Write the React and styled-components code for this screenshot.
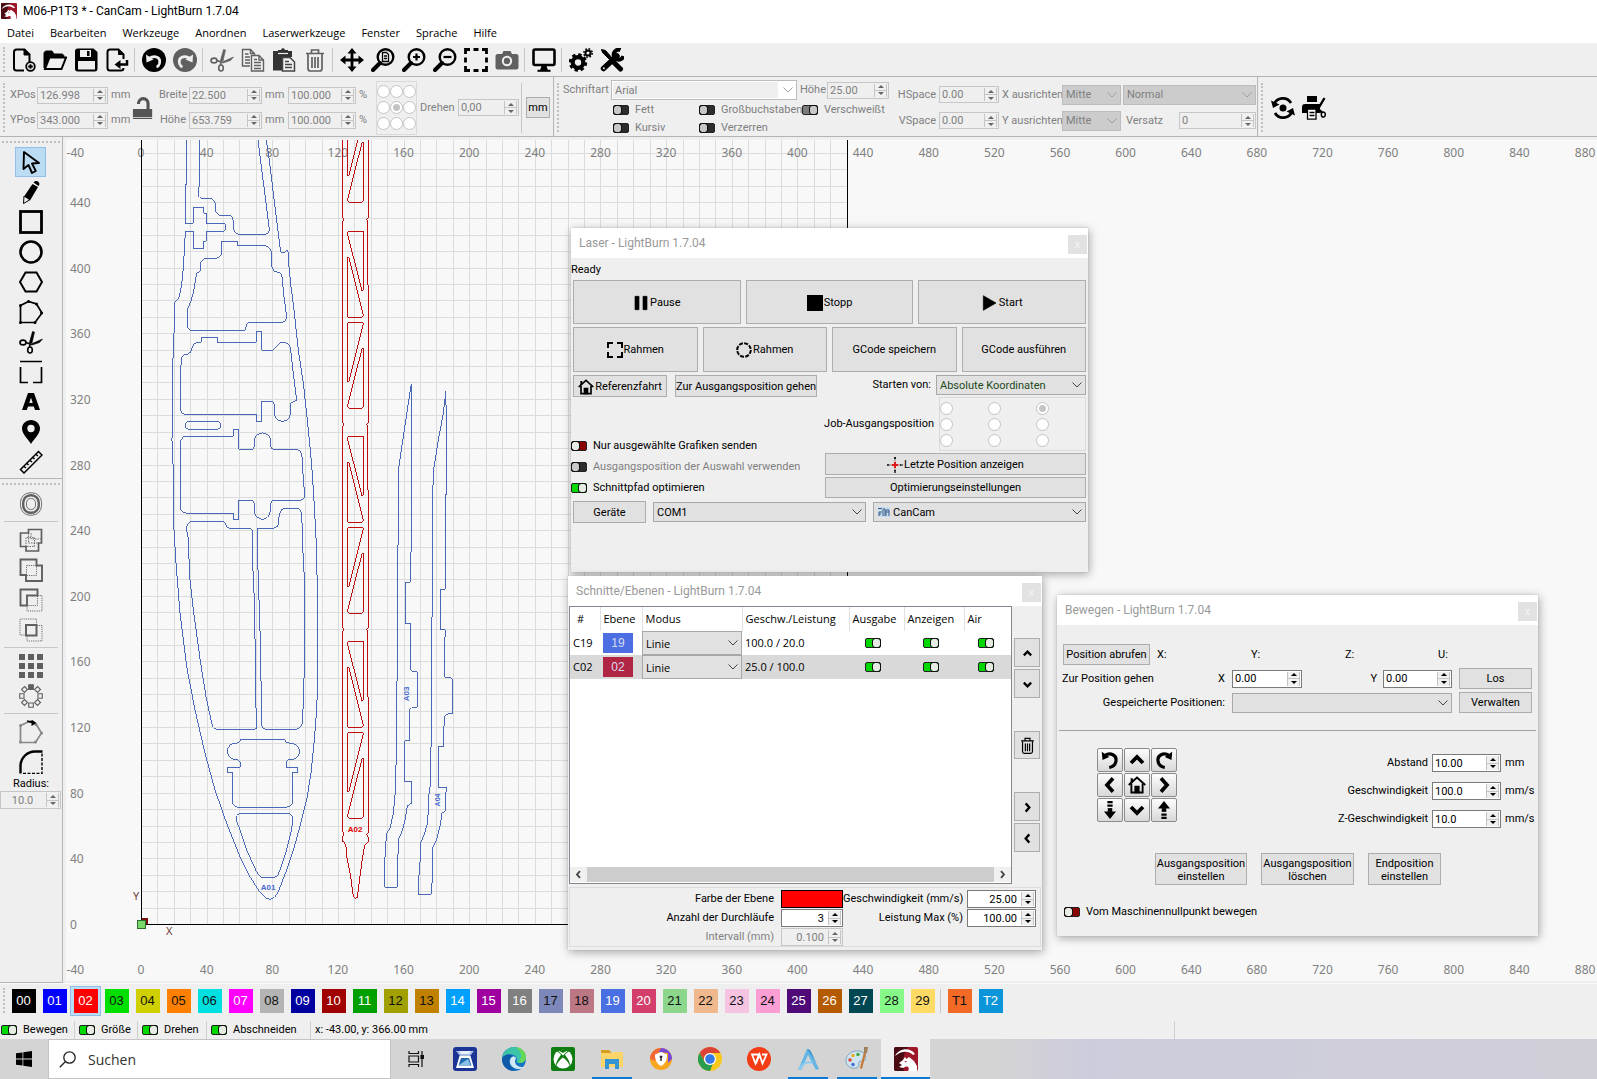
import React from "react";
import styled, { createGlobalStyle, css } from "styled-components";

const GlobalStyle = createGlobalStyle`
  * {
    box-sizing: border-box;
  }

  body {
    margin: 0;
    background: #efefef;
    color: #000;
    font-family: Roboto, "Noto Sans", sans-serif;
    font-size: 11px;
    line-height: 14px;
  }

  button,
  input,
  select {
    margin: 0;
    padding: 0;
    font: inherit;
    color: inherit;
  }
`;

/* ---------- icons ---------- */

const Icon = ({ size = 24, children, ...rest }) => (
  <svg width={size} height={size} viewBox="0 0 24 24" fill="none" stroke="currentColor" strokeWidth="2" aria-hidden="true" {...rest}>
    {children}
  </svg>
);

const scissors = (
  <g strokeWidth="1.6">
    <ellipse cx="4" cy="12.5" rx="3" ry="2.4" />
    <ellipse cx="11" cy="20" rx="2.3" ry="3" />
    <path d="M7 12.5l4 1.5M10.500 17l.5-3" />
    <path d="M10 14L13.500 1.500l2 .5L13 13z" fill="currentColor" strokeWidth="0.6" />
    <path d="M11 14.500L23.500 9l-3 3.500-7.500 2.500z" fill="currentColor" strokeWidth="0.6" />
  </g>
);

const magnifier = (
  <g>
    <circle cx="14.500" cy="9" r="7.800" strokeWidth="2.400" />
    <path d="M9 15L2 22" strokeWidth="4" strokeLinecap="round" />
  </g>
);

const home = (
  <g>
    <path d="M1 12L12 2l11 10" strokeWidth="2.500" />
    <path d="M5 3v6" strokeWidth="3" />
    <path d="M4.500 10v12h15V10" strokeWidth="2.500" />
    <path d="M9.500 22v-8h5v8z" fill="currentColor" />
  </g>
);

const trash = (
  <g strokeWidth="1.700">
    <path d="M3 5.500h18M8.500 5V2h7v3" />
    <path d="M5 6v14.500c0 1.500 1 2.500 2.500 2.500h9c1.500 0 2.500-1 2.500-2.500V6" />
    <path d="M9 9v11M12 9v11M15 9v11" />
  </g>
);

const icons = {
  newFile: (
    <>
      <path d="M12 22.500H4.500c-1.500 0-2.500-1-2.500-2.500V4c0-1.500 1-2.500 2.500-2.500h8l5 5V14" />
      <path d="M12 1.500V7h5.500z" fill="currentColor" strokeWidth="1" />
      <circle cx="18.500" cy="18.500" r="4.300" strokeWidth="1.800" />
      <path d="M18.500 16.200v4.600M16.200 18.500h4.600" strokeWidth="1.800" />
    </>
  ),
  open: (
    <>
      <path d="M1 20V5.500C1 4 2 3 3.500 3H9l2 3h7.500C20 6 21 7 21 8.500H7z" fill="currentColor" strokeWidth="1" />
      <path d="M6.500 9.500h16.500L18.500 21H2z" />
    </>
  ),
  save: (
    <>
      <path d="M1 3c0-1.500 1-2.500 2.500-2.500h16L23.500 4v17c0 1.500-1 2.500-2.500 2.500H3.500c-1.500 0-2.500-1-2.500-2.500z" fill="currentColor" stroke="none" />
      <path d="M6 2h11v7H6zM4 13h17v8.500H4z" fill="#efefef" stroke="none" />
      <path d="M13 3h2.500v5H13z" fill="currentColor" stroke="none" />
    </>
  ),
  exportFile: (
    <>
      <path d="M18.500 11V6.500l-5-5H5C3.500 1.500 2.500 2.500 2.500 4v16c0 1.500 1 2.500 2.500 2.500h11c1.500 0 2.500-1 2.500-2.500" />
      <path d="M13.500 1.500V6.500h5z" fill="currentColor" strokeWidth="1" />
      <path d="M22 12v4.500h-9" strokeWidth="2.500" />
      <path d="M9.500 16.500l6-4.500v9z" fill="currentColor" stroke="none" />
    </>
  ),
  undo: (
    <>
      <circle cx="12" cy="12" r="12" fill="currentColor" stroke="none" />
      <path d="M7 10.500c6-4 12-1 10.500 5-.5 1.800-1.500 3-3 3.500" stroke="#efefef" strokeWidth="2.800" />
      <path d="M4 6.500l.5 8 7-3z" fill="#efefef" stroke="none" />
    </>
  ),
  redo: (
    <>
      <circle cx="12" cy="12" r="12" fill="currentColor" stroke="none" />
      <path d="M17 10.500c-6-4-12-1-10.500 5 .5 1.800 1.500 3 3 3.500" stroke="#efefef" strokeWidth="2.800" />
      <path d="M20 6.500l-.5 8-7-3z" fill="#efefef" stroke="none" />
    </>
  ),
  cut: scissors,
  copy: (
    <g strokeWidth="1.400">
      <path d="M9 18H1.500V1.500h8l4 4V7M9.500 1.500v4h4" />
      <path d="M4 6h3.500M4 9h5M4 12h5M4 15h5" />
      <path d="M10.500 7.500h7.500l4.500 4.500v11h-12zM18 7.500V12h4.500" />
      <path d="M13 11.500h3M13 14.500h7M13 17.500h7M13 20.500h7" />
    </g>
  ),
  paste: (
    <>
      <path d="M1 3h5V2h3c.5-2.500 3.500-2.500 4 0h3v1h4v6h-9v13.500H1z" fill="#333" stroke="none" />
      <path d="M6 5.500h10" stroke="#efefef" strokeWidth="1.200" />
      <path d="M10.500 9.500h7.500l4.500 4.500v9h-12z" fill="#efefef" stroke="#444" strokeWidth="1.500" />
      <path d="M13 13.500h4M13 16.500h7M13 19.500h7" stroke="#444" strokeWidth="1.500" />
    </>
  ),
  trash,
  move: (
    <>
      <path d="M12 3v18M3 12h18" strokeWidth="2.800" />
      <path d="M12 0l4.500 5.500h-9zM12 24l4.500-5.500h-9zM0 12l5.500-4.500v9zM24 12l-5.500-4.500v9z" fill="currentColor" stroke="none" />
    </>
  ),
  zoomPage: (
    <>
      {magnifier}
      <path d="M11.500 4.500h4l2 2v7h-6zM13 8h3M13 10.500h3" strokeWidth="1.300" />
    </>
  ),
  zoomIn: (
    <>
      {magnifier}
      <path d="M14.500 5.500v7M11 9h7" strokeWidth="2.200" />
    </>
  ),
  zoomOut: (
    <>
      {magnifier}
      <path d="M10.500 9h8" strokeWidth="2.200" />
    </>
  ),
  marquee: (
    <path d="M1.500 6V1.500H6M9.500 1.500h5M18 1.500h4.500V6M22.500 9.500v5M22.500 18v4.500H18M14.500 22.500h-5M6 22.500H1.500V18M1.500 14.500v-5" strokeWidth="2.800" />
  ),
  camera: (
    <>
      <path d="M2.500 6H7l1.500-3h7L17 6h4.500c1 0 2 1 2 2v11.500c0 1-1 2-2 2h-19c-1 0-2-1-2-2V8c0-1 1-2 2-2z" fill="currentColor" stroke="none" />
      <circle cx="12" cy="13" r="4.200" stroke="#efefef" />
    </>
  ),
  monitor: (
    <>
      <rect x="1.500" y="1.500" width="21" height="15.500" rx="1.500" strokeWidth="2.600" />
      <path d="M9.500 18h5l1.500 4.500H8z" fill="currentColor" stroke="none" />
      <path d="M5.500 22.800h13" />
    </>
  ),
  gears: (
    <>
      <circle cx="9" cy="14.500" r="5.300" strokeWidth="4.200" />
      <circle cx="9" cy="14.500" r="7.900" strokeWidth="2.600" strokeDasharray="3.400 2.800" />
      <circle cx="19" cy="5" r="2.600" />
      <circle cx="19" cy="5" r="4.200" strokeWidth="1.600" strokeDasharray="1.700 1.600" />
    </>
  ),
  tools: (
    <>
      <path d="M3.500 20.500L17 8" strokeWidth="5.500" strokeLinecap="round" />
      <path d="M20.500 2a5 5 0 1 0 3 6" strokeWidth="4" />
      <path d="M1.500 1.500l4 1L13 11l-2 2-8.500-8.500z" fill="currentColor" strokeWidth="1" />
      <path d="M14.500 15l6 6" strokeWidth="5" strokeLinecap="round" />
      <circle cx="3.800" cy="20.300" r="1" fill="#efefef" stroke="none" />
    </>
  ),
  pointer: <path d="M5 2l-.5 17 5-4 3.500 8 3.800-2-3.800-7.500 7-.5z" strokeWidth="1.900" strokeLinejoin="round" />,
  pencil: (
    <>
      <path d="M13.500 4L19 7 11 20.500l-6-4z" fill="currentColor" stroke="none" />
      <path d="M14.500 2.500c1-1.500 3-2 4.500-1s2 3 .5 4.500z" fill="currentColor" stroke="none" />
      <path d="M5 16l-.5 7.500 6-3.500" strokeWidth="1" />
    </>
  ),
  square: <rect x="1.500" y="1.500" width="21" height="21" strokeWidth="2.800" />,
  circle: <circle cx="12" cy="12" r="10.500" strokeWidth="2.600" />,
  hexagon: <path d="M6.500 2.500h11L23 12l-5.500 9.500h-11L1 12z" />,
  polygon: (
    <>
      <path d="M1.500 5.500L9.500 1.500l8 2.500 5.500 9-7 9.500H1.500z" strokeWidth="1.700" />
      <path d="M1.500 5.500h0M9.500 1.500h0M17.500 4h0M22.500 13h0M16 22.500h0M1.500 22.500h0" strokeWidth="3" strokeLinecap="round" />
    </>
  ),
  tabs: <path d="M1 1.500h22M1.500 7v15.500H9M14 22.500h8.500V7" strokeWidth="1.700" />,
  text: (
    <path d="M9 3h6l6 17h-5l-1.200-3.500H9L7.800 20H3zM12 7.500L10.300 13h3.400z" fill="currentColor" fillRule="evenodd" stroke="none" />
  ),
  pin: <path d="M12 0c5 0 9 4 9 8.500C21 14 15 19 12 24 9 19 3 14 3 8.500 3 4 7 0 12 0zm0 4.800a3.700 3.700 0 1 0 0 7.400 3.700 3.700 0 0 0 0-7.400z" fill="currentColor" fillRule="evenodd" stroke="none" />,
  ruler: (
    <g strokeWidth="1.500">
      <path d="M1.500 19.500L19.500 1.500l3.500 3.500L5 23z" />
      <path d="M5 16.500l2 1.500M8 13.500l1.500 1.500M11 10.500l2 1.500M14 7.500l1.500 1.500M17 4.500l2 1.500" />
    </g>
  ),
  offset: (
    <>
      <rect x="1.500" y=".8" width="21" height="22.400" rx="9.500" strokeWidth=".9" />
      <rect x="4.200" y="3.200" width="15.600" height="17.600" rx="7.500" strokeWidth="2.400" />
      <rect x="7.500" y="6.500" width="9" height="11" rx="4.200" strokeWidth=".9" />
    </>
  ),
  boolUnionAll: (
    <>
      <path d="M1.500 5h8V1.500h13v13.500h-3v8H7v-4.500H1.500z" strokeWidth="1.700" />
      <path d="M9.500 5v10h10M7 18.500V9.500h8.500v9H7M12 5v6h10" strokeWidth=".9" strokeDasharray="1.500 1" />
    </>
  ),
  boolUnion: (
    <>
      <path d="M1.500 1.500h16v6H23V23H7v-6H1.500z" strokeWidth="1.900" />
      <path d="M7.500 7.500h10v10h-10z" strokeWidth=".9" strokeDasharray="1.200 1" />
    </>
  ),
  boolSubtract: (
    <>
      <path d="M1.500 1.500h17v6H8v10H1.500z" strokeWidth="1.900" />
      <path d="M18.500 7.500H23V23H8v-5.500h10.500V7.500" strokeWidth=".9" strokeDasharray="1.200 1" />
    </>
  ),
  boolIntersect: (
    <>
      <path d="M7 7h10.500v10.500H7z" />
      <path d="M17.500 7V1H1v16h6M17.500 7.500H23V23H8v-5.500" strokeWidth=".9" strokeDasharray="1.200 1" />
    </>
  ),
  grid: <path d="M0 0h6v6H0zM9 0h6v6H9zM18 0h6v6h-6zM0 9h6v6H0zM9 9h6v6H9zM18 9h6v6h-6zM0 18h6v6H0zM9 18h6v6H9zM18 18h6v6h-6z" fill="currentColor" stroke="none" />,
  radial: (
    <g strokeWidth="1.100">
      <path d="M9.700.8h4.600v4.600H9.700z" fill="currentColor" />
      <path d="M9.700 19h4.600v4.300H9.700zM.7 9.800H5v4.400H.7zM19 9.800h4.300v4.400H19z" />
      <path d="M5.500 2.500l3 3-3 3-3-3zM18.500 2.500l3 3-3 3-3-3zM5.500 15.500l3 3-3 3-3-3zM18.500 15.500l3 3-3 3-3-3z" />
    </g>
  ),
  startPoint: (
    <>
      <path d="M1.500 5.500L8 2.500M17 4l5.500 9-6 9.500h-15v-17" stroke="#888" strokeWidth="1.700" />
      <path d="M1.500 5.500h0M17 4.500h0M22.500 13h0M16.500 22h0M1.500 22h0" stroke="#888" strokeWidth="3" strokeLinecap="round" />
      <path d="M8 1.500c3-.5 4 .5 6 1" stroke="#000" />
      <path d="M12.500-.5L17.500 3l-5 3z" fill="#000" stroke="none" />
    </>
  ),
  radius: (
    <>
      <path d="M1.500 23.500V16C1.500 8 8 1.500 16 1.500h7.500" strokeWidth="2.400" />
      <path d="M23 3.500v20H3" strokeWidth="1.400" strokeDasharray="3 1.500" />
    </>
  ),
  refresh: (
    <>
      <path d="M3 8.500A9.500 9.500 0 0 1 20 7M21 15.500A9.500 9.500 0 0 1 4 17" strokeWidth="2.800" />
      <path d="M0 4.500l2 7.500 6.500-3.500zM24 19.500L22 12l-6.500 3.500z" fill="currentColor" stroke="none" />
      <circle cx="12" cy="12" r="3.500" fill="currentColor" stroke="none" />
    </>
  ),
  printCut: (
    <>
      <path d="M5 0h10v6H5zM3 8h15v9H0v-6c0-2 1-3 3-3z" fill="currentColor" stroke="none" />
      <path d="M5.500 13h8.500v10.200H5.500z" fill="#fff" strokeWidth="1.300" />
      <path d="M7.500 16.500h5M7.500 19.500h5" strokeWidth="1.300" />
      <path d="M22.500 2L16 13M14 11.500l6 5" strokeWidth="2.400" />
      <ellipse cx="21.300" cy="18.500" rx="2" ry="2.600" strokeWidth="1.500" />
    </>
  ),
  lock: (
    <>
      <path d="M1 13h21v9H1zM1 23h21v1.500H1z" fill="currentColor" stroke="none" />
      <path d="M7 7.500C7 0 17.500 0 17.500 7v7" strokeWidth="3.400" />
    </>
  ),
  pause: <path d="M3 2h6v20H3zM15 2h6v20h-6z" fill="currentColor" stroke="currentColor" strokeWidth="1" />,
  stop: <path d="M0 0h24v24H0z" fill="currentColor" stroke="none" />,
  play: <path d="M2 1l19 11L2 23z" fill="currentColor" stroke="currentColor" strokeWidth="1" />,
  frameSquare: <path d="M1.500 9V1.500H9M15 1.500h7.500V9M22.500 15v7.500H15M9 22.500H1.500V15" strokeWidth="3" />,
  frameCircle: <circle cx="12" cy="12" r="10.200" strokeWidth="3" strokeDasharray="6 2" />,
  home,
  target: (
    <>
      <path d="M12 0v5M12 19v5M0 12h5M19 12h5" strokeWidth="2.600" strokeDasharray="3 1" />
      <path d="M12 7v10M7 12h10" stroke="#e01818" strokeWidth="3" />
    </>
  ),
  up: <path d="M4 16l8-8 8 8" strokeWidth="5" />,
  down: <path d="M4 8l8 8 8-8" strokeWidth="5" />,
  left: <path d="M16 3l-8 9 8 9" strokeWidth="5" />,
  right: <path d="M8 3l8 9-8 9" strokeWidth="5" />,
  turnLeft: (
    <>
      <path d="M5 6c8-5 16 0 15 7-.5 5-4 8-9 9" strokeWidth="4.200" />
      <path d="M1 1l1 11 9-4z" fill="currentColor" stroke="none" />
    </>
  ),
  turnRight: (
    <>
      <path d="M19 6C11 1 3 6 4 13c.5 5 4 8 9 9" strokeWidth="4.200" />
      <path d="M23 1l-1 11-9-4z" fill="currentColor" stroke="none" />
    </>
  ),
  zDown: (
    <>
      <path d="M8.500 1.500h7M8.500 6h7" strokeWidth="3" />
      <path d="M12 9.500v5" strokeWidth="6" />
      <path d="M4 14h16l-8 10z" fill="currentColor" stroke="none" />
    </>
  ),
  zUp: (
    <>
      <path d="M8.500 22.500h7M8.500 18h7" strokeWidth="3" />
      <path d="M12 9.500v5" strokeWidth="6" />
      <path d="M4 10h16L12 0z" fill="currentColor" stroke="none" />
    </>
  ),
};

const DragonLogo = ({ size }) => (
  <Icon size={size} stroke="none">
    <rect width="24" height="24" rx="2" fill="#9c1828" />
    <path d="M2 0h12C9 7 8 15 10 24H2a2 2 0 0 1-2-2V2a2 2 0 0 1 2-2z" fill="#4a0c14" />
    <path d="M1 9C5 1 16 0 21 7l-2 1C14 3 7 4 1 9z" fill="#fff" />
    <path d="M5 16l4-3 2-3 1.500 2L15 10l2 1.500 3 2.500 3 5v5H14c2-3 0-5-2-4.500L9 21l-4-1 3-2z" fill="#fff" />
    <path d="M10 14.500l3-.5-1 1.500z" fill="#9c1828" />
  </Icon>
);

/* ---------- shared controls ---------- */

const ToggleLabel = styled.label`
  display: inline-flex;
  align-items: center;
  gap: 6px;
  white-space: nowrap;
  color: ${(p) => (p.$muted ? "#808080" : "inherit")};
`;

const toggleColors = { on: "#00d800", off: "#8b0000", idle: "#2c2c2c", idleOn: "#7c7c7c" };

const ToggleInput = styled.input`
  appearance: none;
  display: flex;
  flex: none;
  justify-content: ${(p) => (p.defaultChecked ? "flex-end" : "flex-start")};
  width: 16px;
  height: 10px;
  border: 1px solid #222;
  border-radius: 2px;
  background: ${(p) => toggleColors[p.$tone]};

  &::after {
    content: "";
    width: 7px;
    height: 8px;
    border-radius: 2px;
    background: ${(p) => (p.$tone.startsWith("idle") ? "#c8c8c8" : "#e6ebe4")};
    outline: 1px solid #111;
  }
`;

const Toggle = ({ tone = "on", muted, children, ...rest }) => (
  <ToggleLabel $muted={muted}>
    <ToggleInput type="checkbox" $tone={tone} defaultChecked={tone === "on" || tone === "idleOn"} disabled={muted} {...rest} />
    {children}
  </ToggleLabel>
);

const SpinFrame = styled.span`
  display: flex;
  flex: none;
  width: ${(p) => p.$width}px;
  height: ${(p) => p.$height || 18}px;
  border: 1px solid ${(p) => (p.$muted ? "#c6c6c6" : "#7a7a7a")};
  background: ${(p) => (p.$muted ? "#efefef" : "#fff")};
  color: ${(p) => (p.$muted ? "#808080" : "#000")};

  input {
    flex: 1;
    min-width: 0;
    border: 0;
    padding: 1px 3px 0 2px;
    background: transparent;
    text-align: ${(p) => p.$align || "left"};
    outline: none;
  }
`;

const Stepper = styled.span`
  display: flex;
  flex-direction: column;
  width: 13px;
  margin: 1px;
  border: 1px solid #c4c4c4;
  border-width: 0 1px;
  background: #f0f0f0;

  button {
    display: flex;
    flex: 1;
    align-items: center;
    justify-content: center;
    border: 0;
    background: none;
    color: ${(p) => (p.$muted ? "#666" : "#000")};

    &:first-child {
      border-bottom: 1px solid #c4c4c4;
    }
  }
`;

const Spin = ({ label, value, width, height, muted, align }) => (
  <SpinFrame $width={width} $height={height} $muted={muted} $align={align}>
    <input aria-label={label} defaultValue={value} disabled={muted} />
    <Stepper $muted={muted}>
      <button type="button" aria-label={`${label} +`}>
        <svg width="6" height="3" viewBox="0 0 6 3"><path d="M3 0l3 3H0z" fill="currentColor" /></svg>
      </button>
      <button type="button" aria-label={`${label} -`}>
        <svg width="6" height="3" viewBox="0 0 6 3"><path d="M0 0h6L3 3z" fill="currentColor" /></svg>
      </button>
    </Stepper>
  </SpinFrame>
);

const SelectFrame = styled.span`
  display: grid;
  flex: ${(p) => (p.$width ? "none" : 1)};
  align-items: center;
  width: ${(p) => (p.$width ? `${p.$width}px` : "auto")};
  height: ${(p) => p.$height || 20}px;
  border: 1px solid ${(p) => (p.$muted ? "#bcbcbc" : "#a8a8a8")};
  background: ${(p) => (p.$light ? "#fff" : p.$muted ? "#cccccc" : "#e1e1e1")};
  color: ${(p) => p.$color || (p.$muted ? "#808080" : "#000")};

  select,
  svg {
    grid-area: 1 / 1;
  }

  select {
    appearance: none;
    width: 100%;
    height: 100%;
    border: 0;
    padding-top: 1px;
    padding-left: ${(p) => p.$indent || 3}px;
    background: ${(p) => (p.$light ? "linear-gradient(#efefef, #efefef) 1px 1px / calc(100% - 19px) calc(100% - 2px) no-repeat" : "transparent")};
    opacity: 1;
  }

  .chevron {
    justify-self: end;
    margin-right: 3px;
    pointer-events: none;
    color: ${(p) => (p.$muted ? "#a0a0a0" : "#444")};
  }

  .badge {
    margin-left: 4px;
    pointer-events: none;
  }
`;

const Select = ({ label, value, muted, badge, ...rest }) => (
  <SelectFrame $muted={muted} {...rest}>
    <select aria-label={label} defaultValue={value} disabled={muted}>
      <option>{value}</option>
    </select>
    {badge}
    <svg className="chevron" width="10" height="6" viewBox="0 0 10 6" fill="none" stroke="currentColor">
      <path d="M.5.5L5 5 9.500.5" />
    </svg>
  </SelectFrame>
);

const Button = styled.button`
  display: flex;
  flex: ${(p) => (p.$width ? "none" : 1)};
  align-items: center;
  justify-content: center;
  gap: 1px;
  width: ${(p) => (p.$width ? `${p.$width}px` : "auto")};
  height: ${(p) => p.$height || 22}px;
  border: 1px solid #adadad;
  padding-top: 1px;
  background: #e1e1e1;
  color: #000;
  white-space: nowrap;
`;

const RadioGrid = styled.div`
  display: grid;
  flex: none;
  grid-template-columns: repeat(3, ${(p) => p.$col}px);
  grid-auto-rows: ${(p) => p.$row}px;
  align-content: center;
  align-items: center;
  width: ${(p) => p.$width}px;
  height: 54px;
  border: 1px solid #dadada;

  input {
    appearance: none;
    width: 13px;
    height: 13px;
    border: 1px solid #c4c4c4;
    border-radius: 50%;
    background: #fff;

    &:checked {
      background: radial-gradient(circle, #c4c4c4 3px, #fff 4px);
    }
  }
`;

const Anchors = ({ name, checked, ...rest }) => (
  <RadioGrid role="radiogroup" aria-label={name} {...rest}>
    {Array.from({ length: 9 }, (_, i) => (
      <input key={i} type="radio" name={name} aria-label={`${name} ${i + 1}`} defaultChecked={i === checked} disabled />
    ))}
  </RadioGrid>
);

/* ---------- header ---------- */

const Page = styled.div`
  display: flex;
  flex-direction: column;
  min-height: 100vh;
`;

const TitleBar = styled.header`
  display: flex;
  align-items: center;
  gap: 6px;
  height: 22px;
  padding-left: 1px;
  background: #fff;
  font-size: 12px;
`;

const MenuBar = styled.nav`
  display: flex;
  align-items: center;
  gap: 16px;
  height: 21px;
  padding-left: 7px;
  background: #fff;
  font-family: "Open Sans", sans-serif;
  font-size: 11px;

  a {
    color: #000;
    text-decoration: none;
  }
`;

const Toolbar = styled.div`
  display: flex;
  align-items: center;
  height: 34px;
  border-bottom: 1px solid #b4b4b4;
`;

const Grip = styled.span`
  flex: none;
  ${(p) =>
    p.$horizontal
      ? css`
          height: 2px;
          margin: 4px 2px;
          border-top: 2px dotted #c0c0c0;
        `
      : css`
          align-self: stretch;
          width: 2px;
          margin: 4px ${p.$after || 3}px 4px 3px;
          border-left: 2px dotted #c0c0c0;
        `}
`;

const ToolButton = styled.button`
  display: flex;
  align-items: center;
  justify-content: center;
  width: 31px;
  height: 30px;
  border: 1px solid ${(p) => (p.$active ? "#90c0e8" : "transparent")};
  background: ${(p) => (p.$active ? "#bcdcf4" : "none")};
  color: ${(p) => (p.$dim ? "#606060" : "#000")};
`;

const Divider = styled.span`
  flex: none;
  width: 1px;
  height: ${(p) => p.$height || 24}px;
  margin: 0 ${(p) => (p.$wide ? 4 : 3)}px 0 2px;
  background: #c8c8c8;
`;

const Section = styled.section`
  display: flex;
  align-items: center;
  height: 60px;
  padding-top: 2px;
  padding-right: ${(p) => p.$end || 0}px;
  border-right: 1px solid #b4b4b4;
  border-bottom: 1px solid #b4b4b4;
  color: #808080;

  &:last-child {
    flex: 1;
    border-right: 0;
  }
`;

const FieldGrid = styled.div`
  display: grid;
  grid-template-columns: ${(p) => p.$columns};
  align-items: center;
  row-gap: ${(p) => p.$gap}px;
`;

const Caption = styled.span`
  width: ${(p) => (p.$width ? `${p.$width}px` : "auto")};
  padding: 0 3px;
  text-align: ${(p) => (p.$right ? "right" : "left")};
  white-space: nowrap;
`;

const SectionRow = styled.div`
  display: flex;
  align-items: center;
  gap: ${(p) => p.$gap || 0}px;
`;

const LockIcon = styled.span`
  display: flex;
  margin: 0 2px;
  color: #555;
`;

const FontBlock = styled.div`
  display: flex;
  flex-direction: column;
  gap: 3px;
`;

const FontToggles = styled.div`
  display: grid;
  grid-template-columns: 86px 103px auto;
  row-gap: 4px;
  padding-left: 53px;
`;

const topTools = [
  ["Neu", "newFile"],
  ["Öffnen", "open"],
  ["Speichern", "save"],
  ["Exportieren", "exportFile"],
  null,
  ["Rückgängig", "undo"],
  ["Wiederholen", "redo", true],
  null,
  ["Ausschneiden", "cut", true],
  ["Kopieren", "copy", true],
  ["Einfügen", "paste"],
  ["Löschen", "trash", true],
  null,
  ["Verschieben", "move"],
  ["Seite einpassen", "zoomPage"],
  ["Vergrößern", "zoomIn"],
  ["Verkleinern", "zoomOut"],
  ["Auswahl einpassen", "marquee"],
  ["Kamera", "camera", true],
  null,
  ["Vorschau", "monitor"],
  null,
  ["Einstellungen", "gears"],
  ["Geräteeinstellungen", "tools"],
];

const Tools = ({ items, active }) =>
  items.map((item, i) =>
    item ? (
      <ToolButton key={item[1]} type="button" title={item[0]} $dim={item[2]} $active={active === item[1]}>
        <Icon>{icons[item[1]]}</Icon>
      </ToolButton>
    ) : (
      <Divider key={i} />
    )
  );

const PropertyBar = () => (
  <SectionRow>
    <Section $end={3}>
      <Grip $after={2} />
      <FieldGrid $columns="30px 71px 22px" $gap={8}>
        <Caption>XPos</Caption>
        <Spin label="XPos" value="126.998" width={71} height={17} muted />
        <Caption>mm</Caption>
        <Caption>YPos</Caption>
        <Spin label="YPos" value="343.000" width={71} height={17} muted />
        <Caption>mm</Caption>
      </FieldGrid>
      <LockIcon><Icon size={22}>{icons.lock}</Icon></LockIcon>
      <FieldGrid $columns="33px 73px 26px 68px 20px" $gap={8}>
        <Caption $right>Breite</Caption>
        <Spin label="Breite" value="22.500" width={73} height={17} muted />
        <Caption>mm</Caption>
        <Spin label="Breite %" value="100.000" width={68} height={17} muted />
        <Caption>%</Caption>
        <Caption $right>Höhe</Caption>
        <Spin label="Höhe" value="653.759" width={73} height={17} muted />
        <Caption>mm</Caption>
        <Spin label="Höhe %" value="100.000" width={68} height={17} muted />
        <Caption>%</Caption>
      </FieldGrid>
      <Anchors name="Ankerpunkt" checked={4} $width={41} $col={13} $row={16} />
      <Caption $width={41}>Drehen</Caption>
      <Spin label="Drehen" value="0,00" width={61} height={17} muted />
      <Divider $height={50} $wide />
      <Button type="button" $width={24} $height={21}>mm</Button>
    </Section>
    <Section $end={1}>
      <Grip $after={1} />
      <FontBlock>
        <SectionRow>
          <Caption $width={51}>Schriftart</Caption>
          <Select label="Schriftart" value="Arial" muted $light $width={186} />
          <Caption $width={30}>Höhe</Caption>
          <Spin label="Schrifthöhe" value="25.00" width={62} height={17} muted />
        </SectionRow>
        <FontToggles>
          <Toggle tone="idle" muted>Fett</Toggle>
          <Toggle tone="idle" muted>Großbuchstaben</Toggle>
          <Toggle tone="idleOn" muted>Verschweißt</Toggle>
          <Toggle tone="idle" muted>Kursiv</Toggle>
          <Toggle tone="idle" muted>Verzerren</Toggle>
        </FontToggles>
      </FontBlock>
      <FieldGrid $columns="50px 60px 63px 61px 133px" $gap={6}>
        <Caption $right>HSpace</Caption>
        <Spin label="HSpace" value="0.00" width={60} height={17} muted />
        <Caption>X ausrichten</Caption>
        <Select label="X ausrichten" value="Mitte" muted $width={59} />
        <Select label="Textmodus" value="Normal" muted $width={133} />
        <Caption $right>VSpace</Caption>
        <Spin label="VSpace" value="0.00" width={60} height={17} muted />
        <Caption>Y ausrichten</Caption>
        <Select label="Y ausrichten" value="Mitte" muted $width={59} />
        <SectionRow>
          <Caption $width={56}>Versatz</Caption>
          <Spin label="Versatz" value="0" width={77} height={17} muted />
        </SectionRow>
      </FieldGrid>
    </Section>
    <Section>
      <Grip $after={4} />
      <Tools items={[["Ansicht aktualisieren", "refresh"], ["Drucken und Schneiden", "printCut"]]} />
    </Section>
  </SectionRow>
);

/* ---------- left tools ---------- */

const SideBar = styled.aside`
  display: flex;
  flex: none;
  flex-direction: column;
  width: 63px;
  border-right: 1px solid #b4b4b4;
  border-bottom: 1px solid #b4b4b4;
`;

const SideGroup = styled.div`
  display: flex;
  flex-direction: column;

  & + & {
    border-top: 1px solid #b4b4b4;
    margin-top: 1px;
  }

  ${ToolButton} {
    margin-left: 15px;
  }

  ${Divider} {
    width: 54px;
    height: 1px;
    margin: 2px 4px 3px;
  }
`;

const RadiusLabel = styled.span`
  text-align: center;
`;

const drawTools = [
  ["Auswählen", "pointer"],
  ["Linien zeichnen", "pencil"],
  ["Rechteck", "square"],
  ["Ellipse", "circle"],
  ["Polygon", "hexagon"],
  ["Knoten bearbeiten", "polygon"],
  ["Formen trimmen", "cut"],
  ["Haltestege", "tabs"],
  ["Text", "text"],
  ["Laserposition", "pin"],
  ["Messen", "ruler"],
];

const shapeTools = [
  ["Formen versetzen", "offset", true],
  null,
  ["Verschmelzen", "boolUnionAll", true],
  ["Boolesche Vereinigung", "boolUnion", true],
  ["Boolesche Differenz", "boolSubtract", true],
  ["Boolesche Schnittmenge", "boolIntersect", true],
  null,
  ["Gitter-Anordnung", "grid", true],
  ["Kreis-Anordnung", "radial", true],
  null,
  ["Startpunkt", "startPoint"],
  ["Radius", "radius"],
];

/* ---------- drawing area ---------- */

const Workspace = styled.main`
  display: flex;
  flex: 1;
`;

const CanvasArea = styled.div`
  position: relative;
  flex: 1;
  padding: 3px 0 2px 3px;

  > svg {
    display: block;
    width: 100%;
    height: 100%;
    background: #f8f8f8;
  }
`;

const blueParts = [
  // A01, outline
  "M409 30L418 90 433 215 452 367 465 367 468 363 474 363 476 400 483 470 491 530 505 660 520 760 530 850 540 950 547 1030 553 1130 558 1220 560 1300 563 1400 563 1660 560 1740 553 1830 543 1930 530 2010 510 2090 490 2160 470 2220 445 2285Q434 2308 419 2308 403 2306 385 2280L360 2240 330 2180 290 2080 255 1980 225 1870 195 1740 170 1610 150 1450 138 1300 132 1200 131 1120 128 940 125 930 128 910 128 705 131 640 135 515 145 508 152 480 158 440 163 365 166 304 190 304 190 355 221 355 221 334 229 334 229 304 282 304 287 299 287 285 282 280 229 280 229 250 221 250 221 232 190 232 190 280 166 280 166 165 170 165 170 30",
  // A01, cut-outs
  "M208 30L208 170 205 175 205 190Q207 205 220 205L238 205Q255 208 256 222L256 240Q260 255 272 256L298 256Q310 258 310 272L310 290Q312 310 325 313L405 313Q418 310 418 298L384 30",
  "M274 334L322 334 322 346 400 346Q420 348 424 364L424 405Q428 424 440 426 455 428 456 440L462 500 470 560Q468 576 455 577L357 577Q348 580 346 601L182 601Q172 598 172 585L172 540 182 515 190 490 200 430 210 424 212 400Q215 386 230 385L255 385Q272 384 274 372Z",
  "M214 622L262 622 262 637 379 637 379 604 395 604 395 661 430 661Q445 637 460 637 478 640 482 655L484 680 500 812Q482 815 481 825L481 850Q478 874 458 874 436 874 433 850L433 825Q430 814 425 814L395 814 395 874 379 874 379 853 165 853Q152 850 151 840L151 740 154 690Q156 675 165 673L175 672Q184 668 185 655 190 640 200 637L214 637Z",
  "M174 874L264 874Q272 876 272 886 272 896 264 898L174 898Q166 896 166 886 166 876 174 874Z",
  "M160 919L310 919 310 898 326 898 326 958 368 958Q373 955 373 945L373 930Q378 909 398 909 420 912 422 930L422 950Q424 958 430 958L500 958Q516 962 516 980L518 1020 524 1095Q523 1110 510 1111L430 1111Q422 1113 421 1125L421 1145Q415 1168 398 1168 378 1166 373 1148L373 1120Q371 1111 365 1111L326 1111 326 1168 310 1168 310 1150 170 1150Q152 1148 151 1130L151 935Z",
  "M190 1174L280 1174Q285 1176 287 1185 290 1195 300 1195L362 1195 367 1200 368 1300 374 1430 377 1700 380 1795 372 1798 262 1798Q248 1796 245 1780L228 1700 212 1600 190 1440 180 1350 174 1220 170 1200 170 1190Q176 1174 190 1174Z",
  "M383 1200L383 1195 425 1195Q445 1194 446 1180L447 1160Q450 1137 463 1135L500 1135Q514 1138 515 1155L517 1200 520 1300 524 1350 524 1580 520 1710 518 1770Q516 1795 500 1798L405 1798Q396 1796 395 1785L394 1700 390 1500 384 1320Z",
  "M332 1828L464 1828 470 1838 490 1841Q505 1845 509 1864 505 1885 490 1888L475 1889Q469 1892 469 1900L469 1912 503 1912 503 1927 488 1927 488 2020Q485 2030 470 2032L325 2032Q308 2030 308 2015L308 1927 292 1927 292 1912 331 1912 331 1898Q327 1888 318 1888L308 1887Q295 1880 292 1870L292 1858Q300 1841 310 1840L325 1839Q331 1835 332 1828Z",
  "M328 2050L472 2050Q487 2053 488 2065L485 2100 470 2160 450 2220Q445 2240 435 2242L395 2242Q385 2238 378 2222L350 2160 330 2100 318 2070Q317 2055 328 2050Z",
  // A03
  "M844 762L838 800 820 920 806 1015 805 1200 803 1300 803 1650 800 1655 800 1900 797 1910 795 2000 790 2050 780 2095 770 2110 768 2135 764 2200 764 2272 802 2272 805 2130 818 2100 825 2070 832 2028 845 2020 845 1955 824 1955 824 1832 838 1832 838 1740 845 1733 862 1731 862 1625 845 1623 841 1615 841 1480 826 1480 826 1357 841 1357 841 1300 844 1250Z",
  // A04
  "M948 783L940 850 925 930 910 1025 910 1060 907 1075 907 1460 904 1465 904 1850 901 1855 901 1970 898 1975 893 2080 882 2115 872 2140 870 2200 865 2260 865 2293 903 2293 907 2250 909 2150 920 2130 930 2090 936 2050 946 2043 946 2000 950 1972 925 1972 925 1850 940 1850 943 1760 950 1753 968 1750 968 1648 962 1643 945 1641 943 1635 943 1570 946 1500 931 1500 931 1378 946 1378 946 1095 949 1094Z",
];

const redOutline =
  "M638 30L638 262 641 268 638 274 638 878 641 884 638 890 638 1492 641 1498 638 1504 638 2105 641 2112 638 2120 638 2135 643 2137 648 2150 650 2180 662 2240 670 2300 675 2305 682 2303 690 2240 698 2180 704 2146 715 2135 715 2122 710 2115 716 2105 716 1702 713 1700 713 1504 710 1498 716 1492 716 1082 713 1080 713 890 710 884 716 878 716 468 713 465 713 274 710 268 716 262 716 30";

const trussDown = "M655 0L700 0 700 176 696 178 652 6ZM653 78L657 80 700 252 697 258 655 258 652 254Z";
const trussUp = "M655 0L697 0 700 4 657 176 653 178 652 4ZM700 78L696 80 652 252 656 258 697 258 700 254Z";

const trusses = [
  [trussUp, -41],
  [trussDown, 304],
  [trussUp, 577],
  [trussDown, 919],
  [trussUp, 1192],
  [trussDown, 1534],
  [trussUp, 1807],
];

const originX = 75;
const originY = 784;
const cell = 16.41;

const range = (from, to, step) => {
  const list = [];
  for (let n = from; n <= to; n += step) list.push(n);
  return list;
};

const Bed = () => (
  <svg fontFamily='"Noto Sans", sans-serif' fontSize="12">
    <g stroke="#dcdcdc" shapeRendering="crispEdges">
      {range(1, 42, 1).map((n) => (
        <path key={n} d={`M${Math.round(originX + n * cell)}.5 0V${originY}`} />
      ))}
      {range(1, 47, 1).map((n) => (
        <path key={n} d={`M${originX} ${Math.round(originY - n * cell)}.5H781`} />
      ))}
    </g>
    <g fill="#808080">
      {range(-40, 880, 40).map((mm) => (
        <React.Fragment key={mm}>
          <text x={originX + (mm * cell) / 10} y="17" textAnchor="middle">{mm}</text>
          <text x={originX + (mm * cell) / 10} y="834" textAnchor="middle">{mm}</text>
        </React.Fragment>
      ))}
      {range(0, 440, 40).map((mm) => (
        <text key={mm} x="4" y={originY + 5 - (mm * cell) / 10}>{mm}</text>
      ))}
    </g>
    <path d="M75.500 0V784.500H781.500V0" fill="none" stroke="#000" shapeRendering="crispEdges" />
    <g transform="translate(64 -10) scale(.3333)" fill="none" shapeRendering="crispEdges">
      <g stroke="#4a68b8" strokeWidth="3">
        {blueParts.map((d) => (
          <path key={d} d={d} />
        ))}
      </g>
      <g stroke="#c00c0c" strokeWidth="3">
        <path d={redOutline} />
        {trusses.map(([d, y]) => (
          <path key={y} d={d} transform={`translate(0 ${y})`} />
        ))}
      </g>
    </g>
    <g fontFamily='"Liberation Sans", sans-serif' fontSize="8" fontWeight="bold" textAnchor="middle" fill="#4868d0">
      <text x="202" y="750">A01</text>
      <text x="289" y="692" fill="#e00000">A02</text>
      <text transform="translate(343 554) rotate(-90)">A03</text>
      <text transform="translate(374 660) rotate(-90)" fontSize="7">A04</text>
    </g>
    <rect x="76" y="778" width="6" height="6" fill="#7a1010" />
    <rect x="71.500" y="780.500" width="8" height="8" fill="#78d868" stroke="#2c6c2c" />
    <g fill="#704040" fontSize="11">
      <text x="67" y="760">Y</text>
      <text x="100" y="795">X</text>
    </g>
  </svg>
);

/* ---------- floating windows ---------- */

const WindowFrame = styled.section`
  position: absolute;
  left: ${(p) => p.$x}px;
  top: ${(p) => p.$y}px;
  display: flex;
  flex-direction: column;
  width: ${(p) => p.$width}px;
  min-height: ${(p) => p.$height}px;
  background: #efefef;
  box-shadow: 0 0 1px #aaa, 1px 2px 9px rgba(0, 0, 0, 0.35);
`;

const WindowTitle = styled.div`
  display: flex;
  align-items: center;
  justify-content: space-between;
  height: 30px;
  padding: 0 1px 0 8px;
  background: #fff;
  color: #999;
  font-size: 12px;

  button {
    width: 19px;
    height: 19px;
    margin-top: 3px;
    border: 0;
    background: #e2e2e2;
    color: #f4f4f4;
    font-size: 11px;
    line-height: 17px;
  }
`;

const Window = ({ title, children, ...rest }) => (
  <WindowFrame {...rest}>
    <WindowTitle>
      {title}
      <button type="button" aria-label="Schließen">x</button>
    </WindowTitle>
    {children}
  </WindowFrame>
);

const LaserBody = styled.div`
  display: flex;
  flex-direction: column;
  gap: 3px;
  padding: 5px 2px 0 2px;
`;

const Ready = styled.div`
  height: 14px;
  margin-left: -2px;
`;

const LaserSplit = styled.div`
  display: grid;
  grid-template-columns: 244px minmax(0, 1fr);
  column-gap: 8px;
`;

const LaserColumn = styled.div`
  display: flex;
  flex-direction: column;
  gap: 2px;

  > ${Button} {
    flex: none;
  }
`;

const LaserToggles = styled.div`
  display: flex;
  flex: 1;
  flex-direction: column;
  justify-content: flex-end;
  gap: 7px;
  margin: 0 0 3px -2px;
`;

const RightRow = styled.div`
  display: flex;
  align-items: center;
  justify-content: flex-end;
  gap: 5px;
  white-space: nowrap;
`;

const MachineBadge = (
  <svg className="badge" width="12" height="10" viewBox="0 0 12 10" stroke="#38608c" fill="none">
    <rect width="12" height="10" fill="#c8dcec" stroke="none" />
    <path d="M1 9V5h3M1 7h2M5 9V2h2v7M8 5h3M8 9V3h3v6M0 1.500h4" />
  </svg>
);

const LaserWindow = () => (
  <Window title="Laser - LightBurn 1.7.04" $x={508} $y={91} $width={517} $height={344}>
    <LaserBody>
      <Ready>Ready</Ready>
      <SectionRow $gap={5}>
        <Button type="button" $height={44}><Icon size={16}>{icons.pause}</Icon>Pause</Button>
        <Button type="button" $height={44}><Icon size={16}>{icons.stop}</Icon>Stopp</Button>
        <Button type="button" $height={44}><Icon size={16}>{icons.play}</Icon>Start</Button>
      </SectionRow>
      <SectionRow $gap={5}>
        <Button type="button" $height={45}><Icon size={16}>{icons.frameSquare}</Icon>Rahmen</Button>
        <Button type="button" $height={45}><Icon size={16}>{icons.frameCircle}</Icon>Rahmen</Button>
        <Button type="button" $height={45}>GCode speichern</Button>
        <Button type="button" $height={45}>GCode ausführen</Button>
      </SectionRow>
      <LaserSplit>
        <LaserColumn>
          <SectionRow $gap={8}>
            <Button type="button" $width={94}><Icon size={16}>{icons.home}</Icon>Referenzfahrt</Button>
            <Button type="button">Zur Ausgangsposition gehen</Button>
          </SectionRow>
          <LaserToggles>
            <Toggle tone="off">Nur ausgewählte Grafiken senden</Toggle>
            <Toggle tone="idle" muted>Ausgangsposition der Auswahl verwenden</Toggle>
            <Toggle>Schnittpfad optimieren</Toggle>
          </LaserToggles>
        </LaserColumn>
        <LaserColumn>
          <RightRow>
            Starten von:
            <Select label="Starten von" value="Absolute Koordinaten" $width={150} $color="#1c4a1c" />
          </RightRow>
          <RightRow>
            Job-Ausgangsposition
            <Anchors name="Job-Ausgangsposition" checked={2} $width={147} $col={48} $row={16} />
          </RightRow>
          <Button type="button"><Icon size={16}>{icons.target}</Icon>Letzte Position anzeigen</Button>
          <Button type="button" $height={21}>Optimierungseinstellungen</Button>
        </LaserColumn>
      </LaserSplit>
      <SectionRow $gap={7}>
        <Button type="button" $width={73}>Geräte</Button>
        <Select label="Anschluss" value="COM1" />
        <Select label="Laser" value="CanCam" badge={MachineBadge} $indent={19} />
      </SectionRow>
    </LaserBody>
  </Window>
);

const CutsBody = styled.div`
  display: flex;
  gap: 2px;
  padding: 0 2px 0 1px;
`;

const TableBox = styled.div`
  display: flex;
  flex: 1;
  flex-direction: column;
  height: 278px;
  border: 1px solid #828790;
  background: #fff;
`;

const LayerTable = styled.table`
  width: 100%;
  table-layout: fixed;
  border-collapse: collapse;
  font-family: "Open Sans", sans-serif;

  th,
  td {
    height: 24px;
    padding: 0 0 0 3px;
    text-align: left;
    font-weight: normal;
    white-space: nowrap;
  }

  th {
    border-right: 1px solid #e0e0e0;

    &:last-child {
      border-right: 0;
    }
  }

  th:first-child {
    padding-left: 7px;
  }

  td:nth-child(n + 5) {
    padding-left: 16px;
  }

  td:nth-child(6) {
    padding-left: 19px;
  }

  td:nth-child(7) {
    padding-left: 14px;
  }

  td:nth-child(3) {
    padding: 0;
  }
`;

const LayerRow = styled.tr`
  background: ${(p) => (p.$selected ? "#d9d9d9" : "#fff")};
`;

const LayerChip = styled.span`
  display: block;
  width: 30px;
  height: 20px;
  background: ${(p) => p.$color};
  color: #d8dcf0;
  font-family: "Liberation Sans", sans-serif;
  font-size: 12px;
  line-height: 20px;
  text-align: center;
`;

const ScrollBar = styled.div`
  display: flex;
  align-items: center;
  height: 15px;
  margin-top: auto;
  margin-bottom: 1px;
  background: #f0f0f0;

  button {
    display: flex;
    justify-content: center;
    width: 17px;
    border: 0;
    background: none;
    color: #444;
  }

  span {
    flex: 1;
    height: 15px;
    background: #cdcdcd;
  }
`;

const SideButtons = styled.div`
  display: flex;
  flex-direction: column;
  width: 26px;
  padding-top: 32px;

  button {
    flex: none;
    margin-bottom: 2px;
  }

  button:nth-child(3) {
    margin: 31px 0 33px;
  }
`;

const LayerSettings = styled.div`
  display: grid;
  grid-template-columns: 211px 62px minmax(0, 1fr) 69px;
  align-items: center;
  row-gap: 1px;
  margin: 3px 1px;
  padding: 2px 4px 0 0;
  border: 1px solid #dcdcdc;
`;

const LayerLabel = styled.span`
  padding-right: ${(p) => (p.$tight ? 4 : 7)}px;
  text-align: right;
  white-space: nowrap;
  color: ${(p) => (p.$muted ? "#808080" : "#000")};
`;

const LayerColor = styled.button`
  width: 62px;
  height: 18px;
  border: 1px solid #000;
  background: #ff0000;
`;

const layers = [
  { id: "C19", number: "19", color: "#4b6fe3", power: "100.0 / 20.0" },
  { id: "C02", number: "02", color: "#b02444", power: "25.0 / 100.0", selected: true },
];

const CutsWindow = () => (
  <Window title="Schnitte/Ebenen - LightBurn 1.7.04" $x={505} $y={439} $width={474} $height={374}>
    <CutsBody>
      <TableBox>
        <LayerTable>
          <colgroup>
            {[30, 42, 100, 107, 55, 60, 47].map((w, i) => (
              <col key={i} width={w} />
            ))}
          </colgroup>
          <thead>
            <tr>
              {["#", "Ebene", "Modus", "Geschw./Leistung", "Ausgabe", "Anzeigen", "Air"].map((title) => (
                <th key={title}>{title}</th>
              ))}
            </tr>
          </thead>
          <tbody>
            {layers.map((layer) => (
              <LayerRow key={layer.id} $selected={layer.selected}>
                <td>{layer.id}</td>
                <td><LayerChip $color={layer.color}>{layer.number}</LayerChip></td>
                <td><Select label={`Modus ${layer.id}`} value="Linie" $width={100} $height={24} /></td>
                <td>{layer.power}</td>
                <td><Toggle aria-label="Ausgabe" /></td>
                <td><Toggle aria-label="Anzeigen" /></td>
                <td><Toggle aria-label="Air" /></td>
              </LayerRow>
            ))}
          </tbody>
        </LayerTable>
        <ScrollBar>
          <button type="button" aria-label="Nach links"><Icon size={9}>{icons.left}</Icon></button>
          <span />
          <button type="button" aria-label="Nach rechts"><Icon size={9}>{icons.right}</Icon></button>
        </ScrollBar>
      </TableBox>
      <SideButtons>
        <Button type="button" title="Nach oben" $width={26} $height={29}><Icon size={11}>{icons.up}</Icon></Button>
        <Button type="button" title="Nach unten" $width={26} $height={29}><Icon size={11}>{icons.down}</Icon></Button>
        <Button type="button" title="Löschen" $width={26} $height={28}><Icon size={17}>{icons.trash}</Icon></Button>
        <Button type="button" title="Weiter" $width={26} $height={29}><Icon size={11}>{icons.right}</Icon></Button>
        <Button type="button" title="Zurück" $width={26} $height={29}><Icon size={11}>{icons.left}</Icon></Button>
      </SideButtons>
    </CutsBody>
    <LayerSettings>
      <LayerLabel>Farbe der Ebene</LayerLabel>
      <LayerColor type="button" aria-label="Farbe der Ebene" />
      <LayerLabel $tight>Geschwindigkeit (mm/s)</LayerLabel>
      <Spin label="Geschwindigkeit (mm/s)" value="25.00" width={69} align="right" />
      <LayerLabel>Anzahl der Durchläufe</LayerLabel>
      <Spin label="Anzahl der Durchläufe" value="3" width={62} align="right" />
      <LayerLabel $tight>Leistung Max (%)</LayerLabel>
      <Spin label="Leistung Max (%)" value="100.00" width={69} align="right" />
      <LayerLabel $muted>Intervall (mm)</LayerLabel>
      <Spin label="Intervall (mm)" value="0.100" width={62} align="right" muted />
    </LayerSettings>
  </Window>
);

const MoveGrid = styled.div`
  display: grid;
  grid-template-columns: 170px 70px 81px 69px 73px;
  align-items: center;
  row-gap: 3px;
  padding: 3px 5px 0 5px;

  > :last-child,
  > :nth-child(5) {
    margin-left: 7px;
  }
`;

const PositionRow = styled.div`
  display: grid;
  grid-template-columns: 94px 94px 94px 93px auto;
  align-items: center;
  padding: 19px 6px 0;
`;

const SavedSelect = styled.div`
  display: flex;
  grid-column: 2 / 5;
`;

const GoTo = styled.div`
  display: flex;
  justify-content: space-between;
  padding-right: 7px;
`;

const AxisLabel = styled.span`
  padding-right: 6px;
  text-align: right;
`;

const Rule = styled.hr`
  width: calc(100% - 4px);
  margin: 17px 2px;
  border: 0;
  border-top: 1px solid #a0a0a0;
`;

const JogRow = styled.div`
  display: flex;
  justify-content: space-between;
  padding: 0 5px 0 40px;
`;

const JogPad = styled.div`
  display: grid;
  grid-template-columns: repeat(3, 26px);
  grid-auto-rows: 24px;
  align-content: start;
  gap: 1px;

  button {
    display: flex;
    align-items: center;
    justify-content: center;
    border: 1px solid #8c8c8c;
    border-radius: 2px;
    background: linear-gradient(#fdfdfd, #d8d8d8);
  }
`;

const Speeds = styled.div`
  display: grid;
  grid-template-columns: auto 69px 28px;
  grid-auto-rows: 18px;
  align-items: center;
  gap: 10px 4px;
  padding-top: 6px;
  text-align: right;

  > :nth-child(3n) {
    text-align: left;
  }
`;

const OriginRow = styled.div`
  display: flex;
  gap: 14px;
  padding: 25px 0 0 98px;

  button {
    white-space: pre;
    line-height: 13px;
  }
`;

const FromZero = styled.div`
  padding: 20px 7px 0;
`;

const jogButtons = ["turnLeft", "up", "turnRight", "left", "home", "right", "zDown", "down", "zUp"];

const MoveWindow = () => (
  <Window title="Bewegen - LightBurn 1.7.04" $x={994} $y={458} $width={481} $height={341}>
    <PositionRow>
      <Button type="button" $width={87} $height={21}>Position abrufen</Button>
      <span>X:</span>
      <span>Y:</span>
      <span>Z:</span>
      <span>U:</span>
    </PositionRow>
    <MoveGrid>
      <GoTo>
        <span>Zur Position gehen</span>
        <span>X</span>
      </GoTo>
      <Spin label="X" value="0.00" width={70} />
      <AxisLabel>Y</AxisLabel>
      <Spin label="Y" value="0.00" width={69} />
      <Button type="button" $width={73} $height={21}>Los</Button>
      <LayerLabel>Gespeicherte Positionen:</LayerLabel>
      <SavedSelect>
        <Select label="Gespeicherte Positionen" value="" />
      </SavedSelect>
      <Button type="button" $width={73} $height={21}>Verwalten</Button>
    </MoveGrid>
    <Rule />
    <JogRow>
      <JogPad>
        {jogButtons.map((name) => (
          <button key={name} type="button" aria-label={name}>
            <Icon size={18}>{icons[name]}</Icon>
          </button>
        ))}
      </JogPad>
      <Speeds>
        <span>Abstand</span>
        <Spin label="Abstand" value="10.00" width={69} />
        <span>mm</span>
        <span>Geschwindigkeit</span>
        <Spin label="Geschwindigkeit" value="100.0" width={69} />
        <span>mm/s</span>
        <span>Z-Geschwindigkeit</span>
        <Spin label="Z-Geschwindigkeit" value="10.0" width={69} />
        <span>mm/s</span>
      </Speeds>
    </JogRow>
    <OriginRow>
      <Button type="button" $width={92} $height={32}>{"Ausgangsposition\neinstellen"}</Button>
      <Button type="button" $width={93} $height={32}>{"Ausgangsposition\nlöschen"}</Button>
      <Button type="button" $width={73} $height={32}>{"Endposition\neinstellen"}</Button>
    </OriginRow>
    <FromZero>
      <Toggle tone="off">Vom Maschinennullpunkt bewegen</Toggle>
    </FromZero>
  </Window>
);

/* ---------- bottom bars ---------- */

const Palette = styled.div`
  display: flex;
  align-items: center;
  height: 34px;
  border-top: 1px solid #fafafa;
`;

const Swatch = styled.button`
  width: 31px;
  height: 30px;
  border: 1px solid ${(p) => (p.$active ? "#90c0e8" : "transparent")};
  padding: 2px;
  background: ${(p) => (p.$active ? "#bcdcf4" : "none")};

  span {
    display: block;
    width: 24px;
    height: 24px;
    margin: auto;
    background: ${(p) => p.$color};
    color: ${(p) => (p.$dark ? "#111" : "#fff")};
    font-family: "Liberation Sans", sans-serif;
    font-size: 13px;
    line-height: 24px;
    text-align: center;
  }
`;

// label, fill, dark text
const swatches = [
  ["00", "#000000"],
  ["01", "#0000ff"],
  ["02", "#ff0000"],
  ["03", "#00e000", true],
  ["04", "#d0d000", true],
  ["05", "#ff8000", true],
  ["06", "#00e0e0", true],
  ["07", "#ff00ff"],
  ["08", "#b4b4b4", true],
  ["09", "#0000a0"],
  ["10", "#a00000"],
  ["11", "#00a000"],
  ["12", "#a0a000", true],
  ["13", "#c08000", true],
  ["14", "#00a0ff"],
  ["15", "#a000a0"],
  ["16", "#808080"],
  ["17", "#7d87b9", true],
  ["18", "#bb7784", true],
  ["19", "#4a6fe3"],
  ["20", "#d33f6a"],
  ["21", "#8cd78c", true],
  ["22", "#f0b98d", true],
  ["23", "#f6c4e1", true],
  ["24", "#fa9ed4", true],
  ["25", "#500a78"],
  ["26", "#b45a00"],
  ["27", "#004754"],
  ["28", "#86fa88", true],
  ["29", "#ffdb66", true],
  null,
  ["T1", "#f36926", true],
  ["T2", "#0c96d9"],
];

const StatusBar = styled.div`
  display: flex;
  align-items: center;
  height: 22px;
  padding: 4px 0 0 1px;
`;

const StatusItem = styled.span`
  display: flex;
  align-items: center;
  height: 18px;
  width: ${(p) => p.$width}px;
  margin-right: 4px;
  border-right: 1px solid #d0d0d0;
`;

const TaskBar = styled.footer`
  display: flex;
  height: 40px;
  background: linear-gradient(90deg, #d4d4d4 62%, #cdccdc 68%, #d0cfd8);
`;

const StartButton = styled.button`
  display: flex;
  align-items: center;
  justify-content: center;
  width: 48px;
  border: 0;
  background: none;
`;

const Search = styled.label`
  display: flex;
  align-items: center;
  gap: 12px;
  width: 343px;
  border: 1px solid #c4c4c4;
  padding-left: 10px;
  background: #fff;

  input {
    flex: 1;
    min-width: 0;
    border: 0;
    outline: none;
    color: #333;
    font-family: "Open Sans", sans-serif;
    font-size: 14px;

    &::placeholder {
      color: #333;
    }
  }
`;

const TaskButton = styled.button`
  display: flex;
  align-items: center;
  justify-content: center;
  width: 49px;
  border: 0;
  background: ${(p) =>
      p.$open ? `linear-gradient(#0a78d4, #0a78d4) center bottom / ${p.$active ? 49 : 40}px 2px no-repeat` : "none"}
    ${(p) => (p.$active ? ", #efefef" : "")};
`;

const taskIcons = [
  {
    name: "Scanner",
    icon: (
      <Icon stroke="none">
        <rect width="24" height="24" rx="3" fill="#1c3494" />
        <path d="M3 4h18l-4 5h-10z" fill="#a8bce4" />
        <path d="M6 4h12l-2 3H8z" fill="#e8f0f8" />
        <path d="M6.500 9h11L21 21H3z" fill="#fff" />
        <path d="M8 11h8l2.500 7.500h-13z" fill="#2468b0" />
        <path d="M6 18l9-6 2.500 6z" fill="#88c0e8" />
      </Icon>
    ),
  },
  {
    name: "Edge",
    icon: (
      <Icon stroke="none">
        <circle cx="12" cy="12" r="12" fill="#1574c4" />
        <path d="M.5 10C2 3 7 0 12 0c7 0 12 5 12 10 0 4-3 6-6 6s-4-2-3-3c1-5-8-8-14.500-3z" fill="#3cc4a8" />
        <path d="M14 0c6 1 10 5 10 10s-5 7-8 5c5-4 4-10-2-15z" fill="#68d858" />
        <path d="M9 11c-3 4 0 11 8 11 2 0 4-1 5-2-3 0-9 0-9-6 0-1 1-2 1-3-1-2-4-2-5 0z" fill="#d4e8f4" />
        <path d="M0 12c2-5 8-6 11-3-5 1-6 10 2 14C6 25 0 19 0 12z" fill="#1058a8" />
      </Icon>
    ),
  },
  {
    name: "Xbox",
    icon: (
      <Icon stroke="none">
        <rect width="24" height="24" rx="2" fill="#107c10" />
        <circle cx="12" cy="12" r="9.500" fill="#fff" />
        <path d="M6.500 4C9 3.500 12 6 12 6s3-2.500 5.500-2C14 1.800 10 1.800 6.500 4z" fill="#107c10" />
        <path d="M12 8.500L6 2.500l-1 1.200c2 .8 3.500 2.300 5 4C6.500 12 4.500 16 5 19.500 6 16 9 12.500 12 10.500c3 2 6 5.500 7 9 .5-3.500-1.500-7.500-5-11.800 1.500-1.700 3-3.200 5-4l-1-1.200z" fill="#107c10" />
      </Icon>
    ),
  },
  {
    name: "Explorer",
    open: true,
    icon: (
      <Icon stroke="none">
        <path d="M1 3h8l2 2v4H1z" fill="#d89c20" />
        <path d="M1 6h10l2-1h10v15H1z" fill="#fcd468" />
        <path d="M5 12h14v10h-4v-5H9v5H5z" fill="#3494d4" />
      </Icon>
    ),
  },
  {
    name: "Avast Secure Browser",
    icon: (
      <Icon stroke="none">
        <circle cx="12" cy="12" r="11" fill="#f8a820" />
        <path d="M12 1a11 11 0 0 1 11 11l-4 4V6L9 5z" fill="#7848d8" />
        <path d="M1 12A11 11 0 0 1 12 1l-3 5-3 8z" fill="#f46838" />
        <path d="M12 5l6 2.500c0 6-2 9.500-6 11.500-4-2-6-5.500-6-11.500z" fill="#fff" />
        <path d="M10.500 10a1.500 1.500 0 1 1 3 0l-.8 1v3h-1.400v-3z" fill="#223" />
      </Icon>
    ),
  },
  {
    name: "Chrome",
    icon: (
      <Icon stroke="none">
        <circle cx="12" cy="12" r="12" fill="#f8c81c" />
        <path d="M1.600 6A12 12 0 0 1 22.400 6H12a6 6 0 0 0-5.500 8z" fill="#dc4438" />
        <path d="M1.600 6l5.200 9a6 6 0 0 0 8 2L12 24A12 12 0 0 1 1.600 6z" fill="#2c9c50" />
        <circle cx="12" cy="12" r="6" fill="#fff" />
        <circle cx="12" cy="12" r="4.800" fill="#3478e8" />
      </Icon>
    ),
  },
  {
    name: "WPS Office",
    icon: (
      <Icon stroke="none">
        <circle cx="12" cy="12" r="12" fill="#f43c14" />
        <path d="M5 7.500h7l-3.500 9zM9 16.500l3.500-9 3 9 4-9H15" fill="none" stroke="#fff" strokeWidth="1.800" />
      </Icon>
    ),
  },
  {
    name: "Aspire",
    open: true,
    icon: (
      <Icon stroke="none">
        <path d="M2 23L11 2l3 1 9 19-3 1L12 8 5 23z" fill="#64b4e4" />
        <path d="M2 23C5 15 12 13 17 15l-1 2C11 15 7 18 5 23z" fill="#88ccf0" />
        <path d="M11 2l3 1 6 12z" fill="#3c90cc" />
      </Icon>
    ),
  },
  {
    name: "Paint",
    open: true,
    icon: (
      <Icon stroke="none">
        <path d="M1 15C0 8 7 3 14 4c6 1 8 6 6 9-2 2-5 0-6 2s1 5-3 6c-5 1-9-2-10-6z" fill="#d0e4f0" stroke="#6c98b8" strokeWidth=".8" />
        <circle cx="5" cy="13" r="1.800" fill="#dc4838" />
        <circle cx="8" cy="8.500" r="1.800" fill="#e8b028" />
        <circle cx="13" cy="7.500" r="1.800" fill="#48a848" />
        <circle cx="8" cy="17.500" r="1.800" fill="#4070d0" />
        <path d="M20 1l2 1-5 20-2-1z" fill="#c87830" />
        <path d="M19 0h4l-1 6h-3z" fill="#a08058" />
      </Icon>
    ),
  },
  { name: "LightBurn", open: true, active: true, icon: <DragonLogo size={24} /> },
];

const App = () => (
  <>
    <GlobalStyle />
    <Page>
      <TitleBar>
        <DragonLogo size={16} />
        M06-P1T3 * - CanCam - LightBurn 1.7.04
      </TitleBar>
      <MenuBar>
        {["Datei", "Bearbeiten", "Werkzeuge", "Anordnen", "Laserwerkzeuge", "Fenster", "Sprache", "Hilfe"].map((item) => (
          <a key={item} href="#menu">{item}</a>
        ))}
      </MenuBar>
      <Toolbar>
        <Grip />
        <Tools items={topTools} />
      </Toolbar>
      <PropertyBar />
      <Workspace>
        <SideBar>
          <SideGroup>
            <Grip $horizontal />
            <Tools items={drawTools} active="pointer" />
          </SideGroup>
          <SideGroup>
            <Grip $horizontal />
            <Tools items={shapeTools} />
            <RadiusLabel>Radius:</RadiusLabel>
            <Spin label="Radius" value="10.0" width={61} muted align="center" />
          </SideGroup>
        </SideBar>
        <CanvasArea>
          <Bed />
          <LaserWindow />
          <CutsWindow />
          <MoveWindow />
        </CanvasArea>
      </Workspace>
      <Palette>
        <Grip />
        {swatches.map((item) =>
          item ? (
            <Swatch key={item[0]} type="button" $color={item[1]} $dark={item[2]} $active={item[0] === "02"}>
              <span>{item[0]}</span>
            </Swatch>
          ) : (
            <Divider key="divider" />
          )
        )}
      </Palette>
      <StatusBar>
        <StatusItem $width={74}><Toggle>Bewegen</Toggle></StatusItem>
        <StatusItem $width={59}><Toggle>Größe</Toggle></StatusItem>
        <StatusItem $width={65}><Toggle>Drehen</Toggle></StatusItem>
        <StatusItem $width={100}><Toggle>Abschneiden</Toggle></StatusItem>
        <StatusItem $width={860}>x: -43.00, y: 366.00 mm</StatusItem>
      </StatusBar>
      <TaskBar>
        <StartButton type="button" aria-label="Start">
          <svg width="16" height="16" viewBox="0 0 16 16">
            <path d="M0 2.300L6.500 1.400v6.200H0zM7.300 1.300L16 0v7.600H7.300zM0 8.400h6.500v6.200L0 13.700zM7.300 8.400H16V16l-8.700-1.300z" />
          </svg>
        </StartButton>
        <Search>
          <svg width="17" height="17" viewBox="0 0 17 17" fill="none" stroke="#222" strokeWidth="1.300">
            <circle cx="10.500" cy="6.500" r="5.700" />
            <path d="M6.500 10.500L.8 16.200" />
          </svg>
          <input type="text" placeholder="Suchen" aria-label="Suchen" />
        </Search>
        <TaskButton type="button" aria-label="Taskansicht">
          <svg width="16" height="16" viewBox="0 0 16 16" fill="none" stroke="#111" strokeWidth="1.200">
            <path d="M1 0v2.500h9.500V0M1 5h9.500v6H1zM1 16v-2.500h9.500V16M14 0v16" />
            <path d="M13 4.500h2.500v3H13z" fill="#111" />
          </svg>
        </TaskButton>
        {taskIcons.map((task) => (
          <TaskButton key={task.name} type="button" aria-label={task.name} $open={task.open} $active={task.active}>
            {task.icon}
          </TaskButton>
        ))}
      </TaskBar>
    </Page>
  </>
);

export default App;
